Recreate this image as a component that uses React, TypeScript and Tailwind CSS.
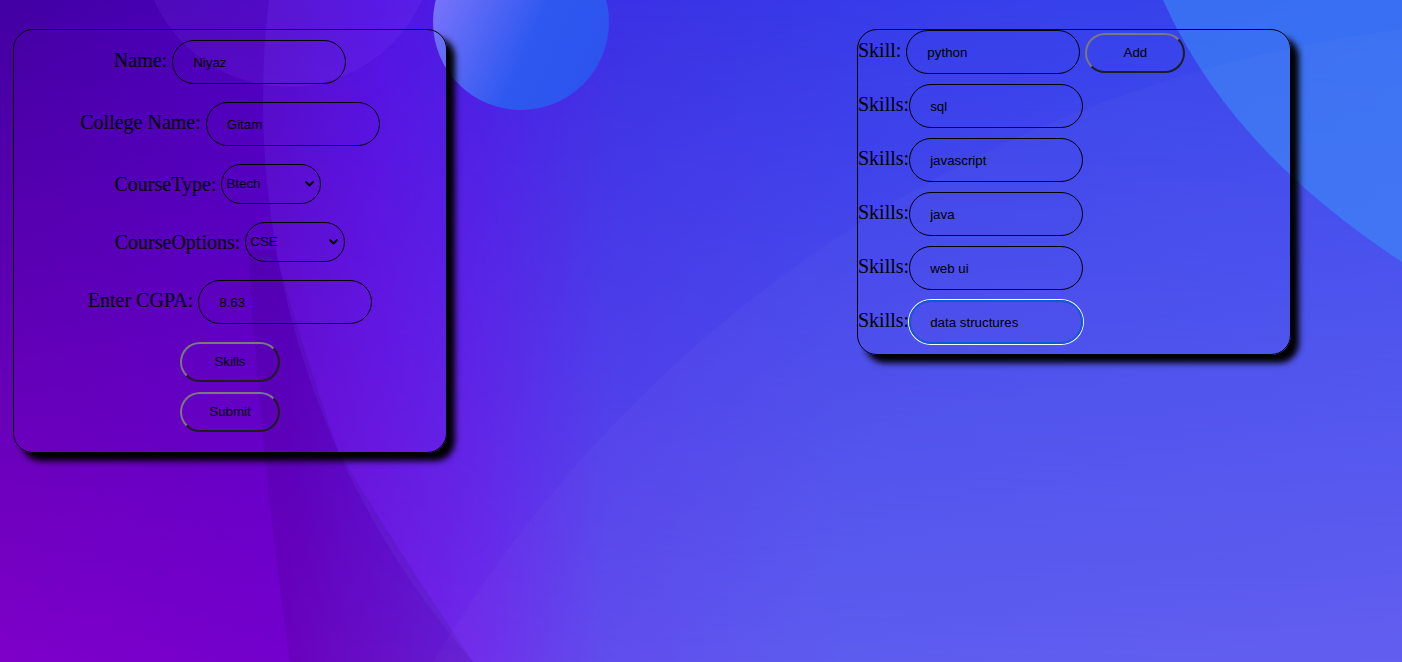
import { useState } from 'react'

const serif = { fontFamily: '"Liberation Serif", "Times New Roman", serif' }

const inputCls =
  'w-[174px] h-[44px] rounded-full border border-black bg-transparent pl-5 text-[13.33px] text-black outline-none font-["Liberation_Sans",Arial,sans-serif]'

const selectCls =
  'w-[100px] h-[40px] appearance-none rounded-full border border-black bg-transparent pl-1 text-[13.33px] text-black outline-none font-["Liberation_Sans",Arial,sans-serif]'

const btnCls =
  'w-[100px] h-[40px] rounded-full border-2 border-t-[#7a7a7a] border-l-[#7a7a7a] border-r-[#1e1e1e] border-b-[#1e1e1e] bg-transparent text-[13.33px] text-black font-["Liberation_Sans",Arial,sans-serif]'

function Chevron() {
  return (
    <svg className="pointer-events-none absolute right-[7px] top-1/2 -translate-y-1/2" width="9" height="6" viewBox="0 0 9 6">
      <path d="M1 1l3.5 3.5L8 1" fill="none" stroke="#000" strokeWidth="1.8" strokeLinecap="round" strokeLinejoin="round" />
    </svg>
  )
}

function Select({ value, options }: { value: string; options: string[] }) {
  return (
    <div className="relative">
      <select defaultValue={value} className={selectCls}>
        {options.map((o) => (
          <option key={o}>{o}</option>
        ))}
      </select>
      <Chevron />
    </div>
  )
}

function Background() {
  return (
    <svg className="absolute inset-0 h-full w-full" viewBox="0 0 1402 662" preserveAspectRatio="none">
      <defs>
        <linearGradient id="topg" x1="0" y1="0" x2="1402" y2="0" gradientUnits="userSpaceOnUse">
          <stop offset="0" stopColor="#4300a2" />
          <stop offset="0.18" stopColor="#4a00bc" />
          <stop offset="0.27" stopColor="#4c08de" />
          <stop offset="0.44" stopColor="#2f2ce0" />
          <stop offset="0.65" stopColor="#2a3ae6" />
          <stop offset="1" stopColor="#2a46ea" />
        </linearGradient>
        <linearGradient id="botg" x1="0" y1="0" x2="1402" y2="0" gradientUnits="userSpaceOnUse">
          <stop offset="0" stopColor="#7e00c8" />
          <stop offset="0.2" stopColor="#7400cc" />
          <stop offset="0.34" stopColor="#6c22e6" />
          <stop offset="0.43" stopColor="#5848ea" />
          <stop offset="0.6" stopColor="#545cec" />
          <stop offset="1" stopColor="#5a5eec" />
        </linearGradient>
        <linearGradient id="fade" x1="0" y1="0" x2="0" y2="662" gradientUnits="userSpaceOnUse">
          <stop offset="0" stopColor="#000" />
          <stop offset="1" stopColor="#fff" />
        </linearGradient>
        <mask id="fm">
          <rect width="1402" height="662" fill="url(#fade)" />
        </mask>
        <linearGradient id="moon" x1="433" y1="0" x2="609" y2="80" gradientUnits="userSpaceOnUse">
          <stop offset="0" stopColor="#7a74fa" />
          <stop offset="0.55" stopColor="#2e58f0" />
          <stop offset="1" stopColor="#2c52ee" />
        </linearGradient>
      </defs>
      <rect width="1402" height="662" fill="url(#topg)" />
      <rect width="1402" height="662" fill="url(#botg)" mask="url(#fm)" />
      <circle cx="1120" cy="100" r="857" fill="#7a50ff" fillOpacity="0.16" />
      <path d="M248 250 Q262 470 290 662 L473 662 Q385 530 338 450 Q300 340 275 250 Z" fill="#000" fillOpacity="0.08" />
      <circle cx="288" cy="-60" r="147" fill="#8a50ff" fillOpacity="0.12" />
      <circle cx="521" cy="22" r="88" fill="url(#moon)" />
      <path d="M1163 0 Q1230 150 1402 262 L1402 0 Z" fill="#3a86f6" fillOpacity="0.65" />
      <circle cx="1560" cy="1330" r="1310" fill="#fff" fillOpacity="0.025" />
    </svg>
  )
}

export default function App() {
  const [skill, setSkill] = useState('python')
  const skills = ['sql', 'javascript', 'java', 'web ui', 'data structures']

  return (
    <div className="relative h-screen w-full overflow-hidden">
      <Background />

      <div className="relative flex items-start pl-[13px] pt-[29px]">
        {/* student form */}
        <div className="flex h-[424px] w-[434px] flex-col items-center rounded-[20px] border border-black pt-[10px] shadow-[8px_8px_6px_#000]" style={serif}>
          <div className="flex items-baseline gap-[5px] text-[20px] text-black">
            <span>Name:</span>
            <input className={inputCls} defaultValue="Niyaz" />
          </div>
          <div className="mt-[18px] flex items-baseline gap-[5px] text-[20px] text-black">
            <span>College Name:</span>
            <input className={inputCls} defaultValue="Gitam" />
          </div>
          <div className="mt-[18px] flex items-center gap-[5px] text-[20px] text-black">
            <span>CourseType:</span>
            <Select value="Btech" options={['Btech', 'Mtech', 'Degree']} />
            <span className="w-[19px]" />
          </div>
          <div className="mt-[18px] flex items-center gap-[5px] text-[20px] text-black">
            <span>CourseOptions:</span>
            <Select value="CSE" options={['CSE', 'ECE', 'EEE', 'MECH']} />
          </div>
          <div className="mt-[18px] flex items-baseline gap-[5px] text-[20px] text-black">
            <span>Enter CGPA:</span>
            <input className={inputCls} defaultValue="8.63" />
          </div>
          <button className={`${btnCls} mt-[18px]`}>Skills</button>
          <button className={`${btnCls} mt-[10px]`}>Submit</button>
        </div>

        {/* skills panel */}
        <div className="ml-[410px] flex w-[434px] flex-col gap-[10px] rounded-[20px] border border-black pb-[10px] shadow-[8px_8px_6px_#000]" style={serif}>
          <div className="flex items-baseline gap-[5px] text-[20px] text-black">
            <span>Skill:</span>
            <input className={inputCls} value={skill} onChange={(e) => setSkill(e.target.value)} />
            <button className={btnCls}>Add</button>
          </div>
          {skills.map((s, i) => (
            <div key={s} className="flex items-baseline text-[20px] text-black">
              <span>Skills:</span>
              <input
                className={
                  i === skills.length - 1
                    ? `${inputCls} !border-[#0b5ad6] shadow-[inset_0_0_0_1px_#0b5ad6,0_0_0_1px_#fff]`
                    : inputCls
                }
                defaultValue={s}
              />
            </div>
          ))}
        </div>
      </div>
    </div>
  )
}
